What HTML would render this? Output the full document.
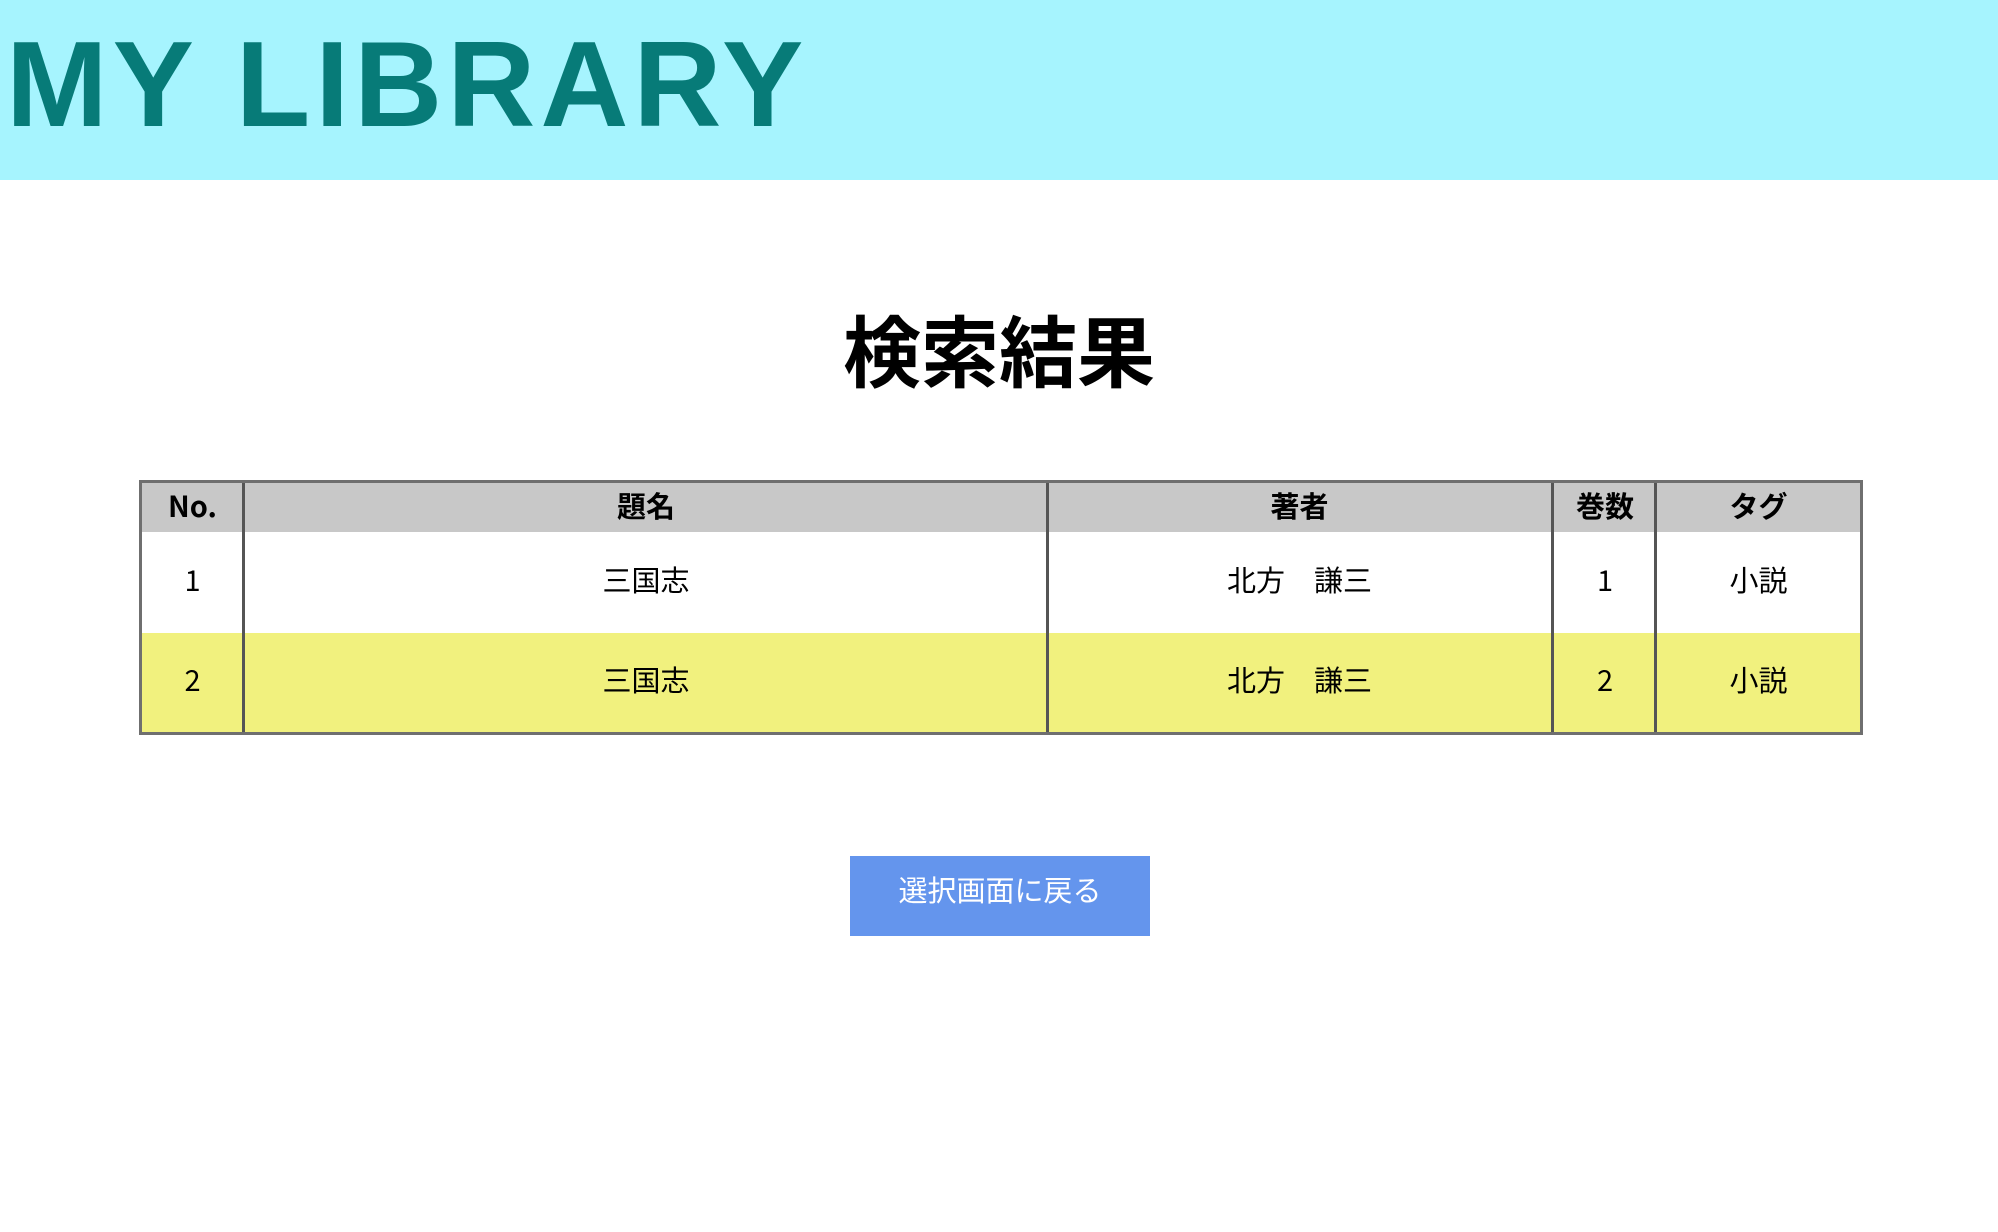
<!DOCTYPE html>
<html><head><meta charset="utf-8"><style>
*{margin:0;padding:0;box-sizing:border-box}
body{width:1998px;height:1232px;background:#fff;position:relative;overflow:hidden;font-family:"Liberation Sans","Noto Sans CJK JP",sans-serif}
.hdr{position:absolute;left:0;top:0;width:1998px;height:180px;background:#a6f4fe}
.logo{position:absolute;left:6px;top:14px;font-size:122px;font-weight:bold;color:#077b78;letter-spacing:5px;line-height:140px;white-space:nowrap}
h1{position:absolute;left:0;width:1998px;top:306px;text-align:center;font-size:78px;font-weight:bold;line-height:96px}
.tbl{position:absolute;left:139px;top:480px;width:1724px;height:255px;border:3px solid #6f6f6f}
.row{position:absolute;left:0;width:1718px}
.c{position:absolute;top:0;height:100%;display:flex;align-items:center;justify-content:center;font-size:29px;font-family:"Noto Sans CJK JP",sans-serif;line-height:1;padding-bottom:6px}
.v{position:absolute;top:0;width:3px;height:100%;background:#555}
.btn{position:absolute;left:850px;top:856px;width:300px;height:80px;background:#6495ed;color:#fff;font-size:29px;display:flex;align-items:center;justify-content:center;padding-bottom:14px}
</style></head><body>
<div class="hdr"><div class="logo">MY LIBRARY</div></div>
<h1>検索結果</h1>
<div class="tbl">
 <div class="row" style="top:0;height:49px;background:#c8c8c8">
  <div class="c" style="left:0;width:101px;font-weight:bold;padding-bottom:4px">No.</div>
  <div class="c" style="left:102px;width:804px;font-weight:bold;padding-bottom:4px">題名</div>
  <div class="c" style="left:906px;width:503px;font-weight:bold;padding-bottom:4px">著者</div>
  <div class="c" style="left:1412px;width:102px;font-weight:bold;padding-bottom:4px">巻数</div>
  <div class="c" style="left:1515px;width:203px;font-weight:bold;padding-bottom:4px">タグ</div>
 </div>
 <div class="row" style="top:49px;height:101px;background:#fff">
  <div class="c" style="left:0;width:101px">1</div>
  <div class="c" style="left:102px;width:804px">三国志</div>
  <div class="c" style="left:906px;width:503px">北方　謙三</div>
  <div class="c" style="left:1412px;width:102px">1</div>
  <div class="c" style="left:1515px;width:203px">小説</div>
 </div>
 <div class="row" style="top:150px;height:99px;background:#f1f17e">
  <div class="c" style="left:0;width:101px">2</div>
  <div class="c" style="left:102px;width:804px">三国志</div>
  <div class="c" style="left:906px;width:503px">北方　謙三</div>
  <div class="c" style="left:1412px;width:102px">2</div>
  <div class="c" style="left:1515px;width:203px">小説</div>
 </div>
 <div class="v" style="left:100px"></div>
 <div class="v" style="left:904px"></div>
 <div class="v" style="left:1409px"></div>
 <div class="v" style="left:1512px"></div>
</div>
<div class="btn">選択画面に戻る</div>
</body></html>
